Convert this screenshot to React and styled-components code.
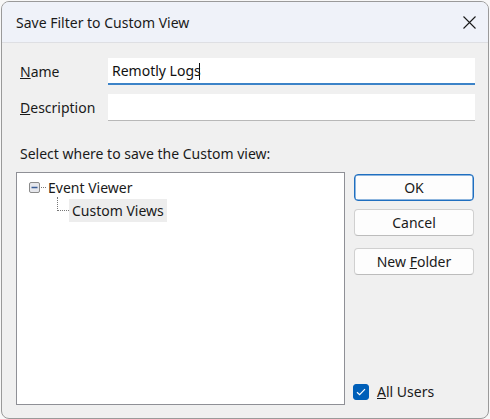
import React, { useState } from 'react'
import styled, { createGlobalStyle } from 'styled-components'

const GlobalStyle = createGlobalStyle`
    html, body {
        margin: 0;
        padding: 0;
        background: #f7f7f7;
    }
    body {
        font-family: "Noto Sans", "Open Sans", sans-serif;
        font-size: 14px;
        color: #1a1a1a;
    }
`

const App = () => {
    const [name, setName] = useState('Remotly Logs')
    const [description, setDescription] = useState('')
    const [allUsers, setAllUsers] = useState(true)

    return (
        <>
            <GlobalStyle />
            <Window>
                <TitleBar>
                    <Title>Save Filter to Custom View</Title>
                    <CloseButton>
                        <svg width="13" height="13" viewBox="0 0 13 13">
                            <path d="M0.5 0.5 L12.5 12.5 M12.5 0.5 L0.5 12.5" stroke="#1a1a1a" strokeWidth="1.1" />
                        </svg>
                    </CloseButton>
                </TitleBar>
                <Body>
                    <FieldGrid>
                        <Label><u>N</u>ame</Label>
                        <InputWrap>
                            <TextInput
                                $focused
                                value={name}
                                onChange={(e) => setName(e.target.value)}
                            />
                            <Caret />
                        </InputWrap>
                        <Label><u>D</u>escription</Label>
                        <InputWrap>
                            <TextInput
                                value={description}
                                onChange={(e) => setDescription(e.target.value)}
                            />
                        </InputWrap>
                    </FieldGrid>
                    <SectionLabel>Select where to save the Custom view:</SectionLabel>
                    <Main>
                        <TreeBox>
                            <TreeRow>
                                <Expander>
                                    <svg width="11" height="11" viewBox="0 0 11 11">
                                        <rect x="0.5" y="0.5" width="10" height="10" rx="1.5" fill="#e6e7ec" stroke="#8a8a8a" />
                                        <path d="M2.5 5.5 H8.5" stroke="#3a5d96" strokeWidth="1.4" />
                                    </svg>
                                </Expander>
                                <Connector />
                                <NodeText>Event Viewer</NodeText>
                            </TreeRow>
                            <ChildRow>
                                <Elbow />
                                <NodeText $selected>Custom Views</NodeText>
                            </ChildRow>
                        </TreeBox>
                        <Side>
                            <Button $primary>OK</Button>
                            <Button>Cancel</Button>
                            <Button $gap>New <u>F</u>older</Button>
                            <Spacer />
                            <CheckRow onClick={() => setAllUsers(!allUsers)}>
                                <CheckBox $checked={allUsers}>
                                    {allUsers && (
                                        <svg width="10" height="8" viewBox="0 0 10 8">
                                            <path d="M1 4.2 L3.6 6.6 L9 1.2" fill="none" stroke="#fff" strokeWidth="1.2" />
                                        </svg>
                                    )}
                                </CheckBox>
                                <span><u>A</u>ll Users</span>
                            </CheckRow>
                        </Side>
                    </Main>
                </Body>
            </Window>
        </>
    )
}

const Window = styled.div`
    margin: 1px;
    width: 486px;
    height: 416px;
    border: 1px solid #9a9a9a;
    border-radius: 8px;
    overflow: hidden;
    background: #f0f0f0;
    display: flex;
    flex-direction: column;
`

const TitleBar = styled.div`
    height: 40px;
    flex-shrink: 0;
    display: flex;
    align-items: center;
    justify-content: space-between;
    padding: 0 8px 0 14px;
    background: #eff2f9;
    border-bottom: 1px solid #dedfe3;
`

const Title = styled.div`
    font-size: 14px;
    color: #1a1a1a;
`

const CloseButton = styled.div`
    width: 22px;
    height: 22px;
    display: flex;
    align-items: center;
    justify-content: center;
`

const Body = styled.div`
    flex: 1;
    display: flex;
    flex-direction: column;
    padding: 15px 13px 13px 14px;
`

const FieldGrid = styled.div`
    display: grid;
    grid-template-columns: 88px 1fr;
    row-gap: 9px;
    align-items: center;
    padding-left: 4px;
`

const Label = styled.div`
    font-size: 14px;
`

const InputWrap = styled.div`
    position: relative;
    display: flex;
`

const TextInput = styled.input`
    flex: 1;
    height: 27px;
    box-sizing: border-box;
    border: none;
    border-bottom: ${(p) => (p.$focused ? '2px solid #3c83c8' : '1px solid #b8b8b8')};
    background: #fff;
    padding: 0 4px;
    font-family: inherit;
    font-size: 14px;
    color: #111;
    outline: none;
`

const Caret = styled.div`
    position: absolute;
    left: 91px;
    top: 5px;
    width: 1px;
    height: 17px;
    background: #111;
`

const SectionLabel = styled.div`
    margin: 23px 0 9px 4px;
`

const Main = styled.div`
    flex: 1;
    display: flex;
    gap: 9px;
`

const TreeBox = styled.div`
    width: 329px;
    box-sizing: border-box;
    border: 1px solid #8f9096;
    background: #fff;
    padding: 4px 0 0 12px;
`

const TreeRow = styled.div`
    display: flex;
    align-items: center;
    height: 20px;
`

const Expander = styled.div`
    width: 11px;
    height: 11px;
    display: flex;
`

const Connector = styled.div`
    width: 5px;
    border-top: 1px dotted #777;
    margin-left: 1px;
`

const ChildRow = styled.div`
    display: flex;
    align-items: center;
    height: 23px;
    margin-left: 28px;
    margin-top: 2px;
`

const Elbow = styled.div`
    width: 12px;
    height: 14px;
    align-self: flex-start;
    margin-top: -2px;
    border-left: 1px dotted #777;
    border-bottom: 1px dotted #777;
    box-sizing: border-box;
`

const NodeText = styled.div`
    padding: 0 3px 0 ${(p) => (p.$selected ? '3px' : '2px')};
    background: ${(p) => (p.$selected ? '#ededed' : 'transparent')};
    line-height: 23px;
`

const Side = styled.div`
    flex: 1;
    display: flex;
    flex-direction: column;
    gap: 8px;
    padding: 2px 0 0 0;
`

const Button = styled.button`
    height: 27px;
    width: 120px;
    box-sizing: border-box;
    border: ${(p) => (p.$primary ? '1px solid #1f6fc0' : '1px solid #d0d0d0')};
    box-shadow: ${(p) => (p.$primary ? 'inset 0 0 0 0.5px #1f6fc0' : 'none')};
    border-bottom-color: ${(p) => (p.$primary ? '#1f6fc0' : '#bcbcbc')};
    border-radius: 4px;
    background: #fdfdfd;
    font-family: inherit;
    font-size: 14px;
    color: #1a1a1a;
    margin-top: ${(p) => (p.$gap ? '4px' : '0')};
    padding: 0;
`

const Spacer = styled.div`
    flex: 1;
`

const CheckRow = styled.label`
    display: flex;
    align-items: center;
    gap: 8px;
    margin: 0 0 4px -1px;
    cursor: default;
`

const CheckBox = styled.div`
    width: 16px;
    height: 16px;
    border-radius: 3px;
    box-sizing: border-box;
    background: ${(p) => (p.$checked ? '#005fb8' : '#fff')};
    border: 1px solid ${(p) => (p.$checked ? '#005fb8' : '#888')};
    display: flex;
    align-items: center;
    justify-content: center;
`

export default App
